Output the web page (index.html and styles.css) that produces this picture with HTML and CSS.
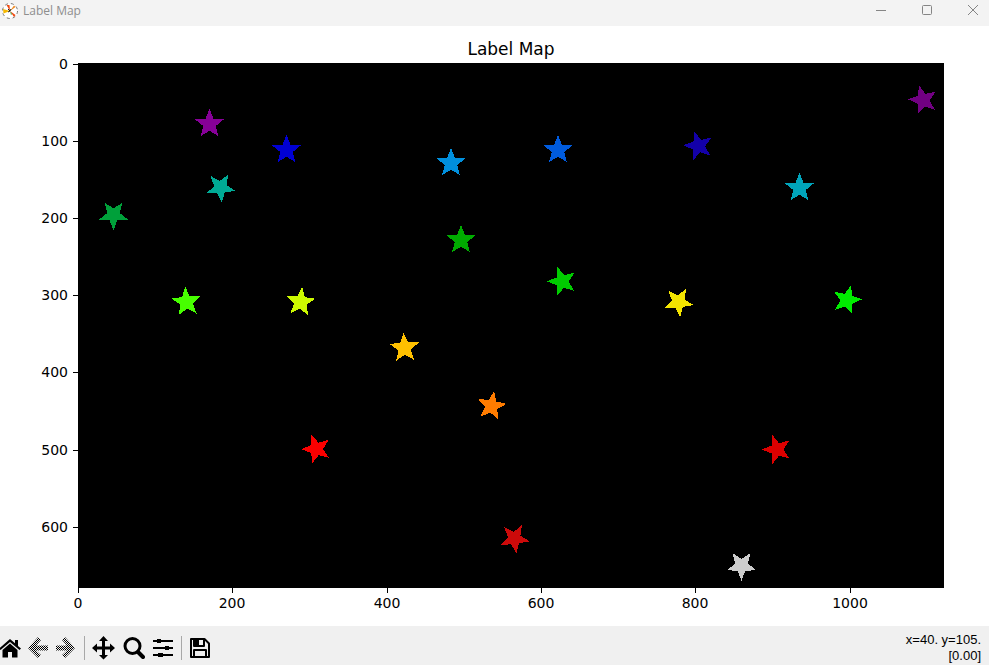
FILE: index.html
```html
<!DOCTYPE html>
<html lang="en">
<head>
<meta charset="utf-8">
<title>Label Map</title>
<link rel="stylesheet" href="styles.css">
</head>
<body>
<header class="titlebar">
  <svg class="app-icon" viewBox="0 0 18 18" aria-hidden="true">
    <circle cx="9" cy="9" r="7.500" fill="#fff" stroke="#777" stroke-dasharray="3 3"/>
    <path d="M9 9 2 7 2.500 11.500Z" fill="#f5b800"/>
    <path d="M9 9 5.500 3 8.500 3Z" fill="#f04a10"/>
    <path d="M9 9 13 3.500 14.500 5Z" fill="#f08a20"/>
    <path d="M9 9 14.500 13 13 15Z" fill="#f04a10"/>
    <path d="M9 9 10 13 11 12Z" fill="#3a9a3a"/>
    <path d="M7 7 9 9 7 10M9 9 10 7" fill="none" stroke="#222"/>
  </svg>
  <span class="caption">Label Map</span>
  <div class="window-buttons">
    <button type="button" aria-label="Minimize"><svg viewBox="0 0 12 12"><path d="M1 5.500h10"/></svg></button>
    <button type="button" aria-label="Maximize"><svg viewBox="0 0 12 12"><rect x="1.5" y="0.5" width="9" height="9" rx="1"/></svg></button>
    <button type="button" aria-label="Close"><svg viewBox="0 0 12 12"><path d="M1 0l10 10M11 0 1 10"/></svg></button>
  </div>
</header>

<main class="figure">
  <svg class="plot" viewBox="0 0 989 600" role="img" aria-label="Label Map">
    <defs>
      <path id="star" d="M0-15.300 3.9-5.3 14.6-4.800 6.2 2.1 9 12.400 0 6.6-9 12.400-6.2 2.1-14.6-4.800-3.9-5.3Z"/>
    </defs>
    <rect class="axes" x="78" y="37" width="866" height="525"/>
    <g class="stars">
      <use href="#star" fill="#710082" transform="translate(923 74) rotate(-15)"/>
      <use href="#star" fill="#860097" transform="translate(209.5 98)"/>
      <use href="#star" fill="#1300a8" transform="translate(698.5 120) rotate(-15)"/>
      <use href="#star" fill="#0000d3" transform="translate(286.5 124)"/>
      <use href="#star" fill="#005bdd" transform="translate(558 124)"/>
      <use href="#star" fill="#008fdd" transform="translate(451 137)"/>
      <use href="#star" fill="#00a4bb" transform="translate(799.5 162)"/>
      <use href="#star" fill="#00aa95" transform="translate(220.500 161.500) rotate(31)"/>
      <use href="#star" fill="#00a03a" transform="translate(113.5 189) rotate(36)"/>
      <use href="#star" fill="#00ab00" transform="translate(461 214)"/>
      <use href="#star" fill="#00cb00" transform="translate(562 255.500) rotate(-17)"/>
      <use href="#star" fill="#00ec00" transform="translate(847 274) rotate(15)"/>
      <use href="#star" fill="#47ff00" transform="translate(186.5 276) rotate(-5)"/>
      <use href="#star" fill="#ccf900" transform="translate(300.5 276) rotate(6)"/>
      <use href="#star" fill="#f3e400" transform="translate(678.5 276) rotate(30)"/>
      <use href="#star" fill="#ffc000" transform="translate(404.5 322) rotate(-3)"/>
      <use href="#star" fill="#ff7c00" transform="translate(491.500 380) rotate(10)"/>
      <use href="#star" fill="#fa0000" transform="translate(316.5 423) rotate(-19)"/>
      <use href="#star" fill="#dc0000" transform="translate(777 423.500) rotate(-18)"/>
      <use href="#star" fill="#cc0a0a" transform="translate(514.5 512.500) rotate(29)"/>
      <use href="#star" fill="#cccccc" transform="translate(741.5 539.500) rotate(36)"/>
    </g>
    <path class="ticks" d="M73 38.5h5M73 115.500h5M73 192.500h5M73 269.500h5M73 346.500h5M73 424.500h5M73 501.500h5M78.500 562v5M232.500 562v5M387.500 562v5M541.500 562v5M695.500 562v5M850.500 562v5"/>
    <g class="labels labels-y">
      <text x="68" y="43">0</text>
      <text x="68" y="120">100</text>
      <text x="68" y="197">200</text>
      <text x="68" y="274">300</text>
      <text x="68" y="351">400</text>
      <text x="68" y="429">500</text>
      <text x="68" y="506">600</text>
    </g>
    <g class="labels labels-x">
      <text x="78" y="582">0</text>
      <text x="232" y="582">200</text>
      <text x="387" y="582">400</text>
      <text x="541" y="582">600</text>
      <text x="695" y="582">800</text>
      <text x="850" y="582">1000</text>
    </g>
    <text class="plot-title" x="511" y="29">Label Map</text>
  </svg>
</main>

<footer class="toolbar">
  <div class="tools">
    <div class="tool-group">
      <button type="button" aria-label="Home"><svg viewBox="0 0 24 24"><path d="M12 3 1 12.500l1.500 1.500L12 6l9.500 8 1.500-1.500-3-2.600V4h-3v3.300ZM12 7.500 4.500 14v7.500H10V16h4v5.500h5.500V14Z"/></svg></button>
      <button type="button" aria-label="Back" disabled><svg viewBox="0 0 24 24"><defs><pattern id="dither" width="2" height="2" patternUnits="userSpaceOnUse"><path d="M0 0h1v1H0ZM1 1h1v1H1Z" shape-rendering="crispEdges"/></pattern></defs><path fill="url(#dither)" d="M12 1 15 4 10 9.500H22v5H10L15 19l-3 3L2 12Z"/></svg></button>
      <button type="button" aria-label="Forward" disabled><svg viewBox="0 0 24 24"><path fill="url(#dither)" d="M11 1 8 4l5 5.500H2v5H13L8 19l3 3L21 12Z"/></svg></button>
    </div>
    <span class="separator"></span>
    <div class="tool-group view-group">
      <button type="button" aria-label="Pan"><svg viewBox="0 0 24 24"><path d="M12.500 0 8 5h3v5.500H6v-3L1 12l5 4.500v-3h5V19H8l4.500 4.500L17 19h-3v-5.500h5v3l5-4.500-5-4.500v3h-5V5h3Z"/></svg></button>
      <button type="button" aria-label="Zoom"><svg viewBox="0 0 24 24"><circle cx="11.500" cy="10" r="7.500" fill="none" stroke="#000" stroke-width="3"/><path d="m17 16 5 5" stroke="#000" stroke-width="4" stroke-linecap="round"/></svg></button>
      <button type="button" aria-label="Configure subplots"><svg viewBox="0 0 24 24"><path d="M2 4h20v2H2ZM2 11h20v2H2ZM2 18h20v2H2Z"/><path d="M6 3h4v4H6ZM14 10h4v4h-4ZM7 17h5v4H7Z"/></svg></button>
    </div>
    <span class="separator"></span>
    <button type="button" aria-label="Save"><svg viewBox="0 0 24 24"><path d="M3 3h13.500l4.500 4.500V21H3ZM6 21v-7h12v7M6 3v7h10V3" fill="none" stroke="#000" stroke-width="2" stroke-linejoin="round"/><path d="M6 3h5v7H6Z"/></svg></button>
  </div>
  <output class="status">x=40. y=105.<br>[0.00]</output>
</footer>
</body>
</html>
```

FILE: styles.css
```css
* {
  box-sizing: border-box;
}

body {
  margin: 0;
  min-height: 100vh;
  display: flex;
  flex-direction: column;
  background: #fff;
  color: #000;
}

button {
  padding: 0;
  border: 0;
  background: none;
}

svg {
  display: block;
}

.titlebar {
  display: flex;
  align-items: center;
  height: 26px;
  padding: 0 0 5px 1px;
  gap: 4px;
  background: #f3f3f3;
}

.app-icon {
  width: 18px;
  height: 18px;
}

.caption {
  font: 12px/16px "Open Sans", "Noto Sans", sans-serif;
  color: #8e8e8e;
}

.window-buttons {
  display: flex;
  margin-left: auto;
  padding-right: 10px;
  gap: 34px;
}

.window-buttons svg {
  width: 12px;
  height: 12px;
  fill: none;
  stroke: #858585;
}

.figure {
  flex: 1;
}

.plot {
  width: 100%;
  height: auto;
}

.stars,
.axes,
.ticks {
  shape-rendering: crispEdges;
}

.ticks {
  stroke: #000;
}

.labels {
  font: 14px "DejaVu Sans", sans-serif;
}

.labels-y {
  text-anchor: end;
}

.labels-x {
  text-anchor: middle;
}

.plot-title {
  font: 17px "DejaVu Sans", sans-serif;
  text-anchor: middle;
}

.toolbar {
  display: flex;
  justify-content: space-between;
  align-items: flex-start;
  padding-right: 8px;
  background: #f0f0f0;
}

.tools {
  display: flex;
  align-items: center;
  padding-top: 10px;
  gap: 6px;
  margin-left: -2px;
}

.tool-group {
  display: flex;
  gap: 4px;
}

.view-group {
  gap: 6px;
}

.tools svg {
  width: 24px;
  height: 24px;
}

.separator {
  width: 1px;
  height: 24px;
  background: #a8a8a8;
}

.status {
  padding: 6px 0 1px;
  font: 13px/16px "Liberation Sans", sans-serif;
  text-align: right;
}
```
